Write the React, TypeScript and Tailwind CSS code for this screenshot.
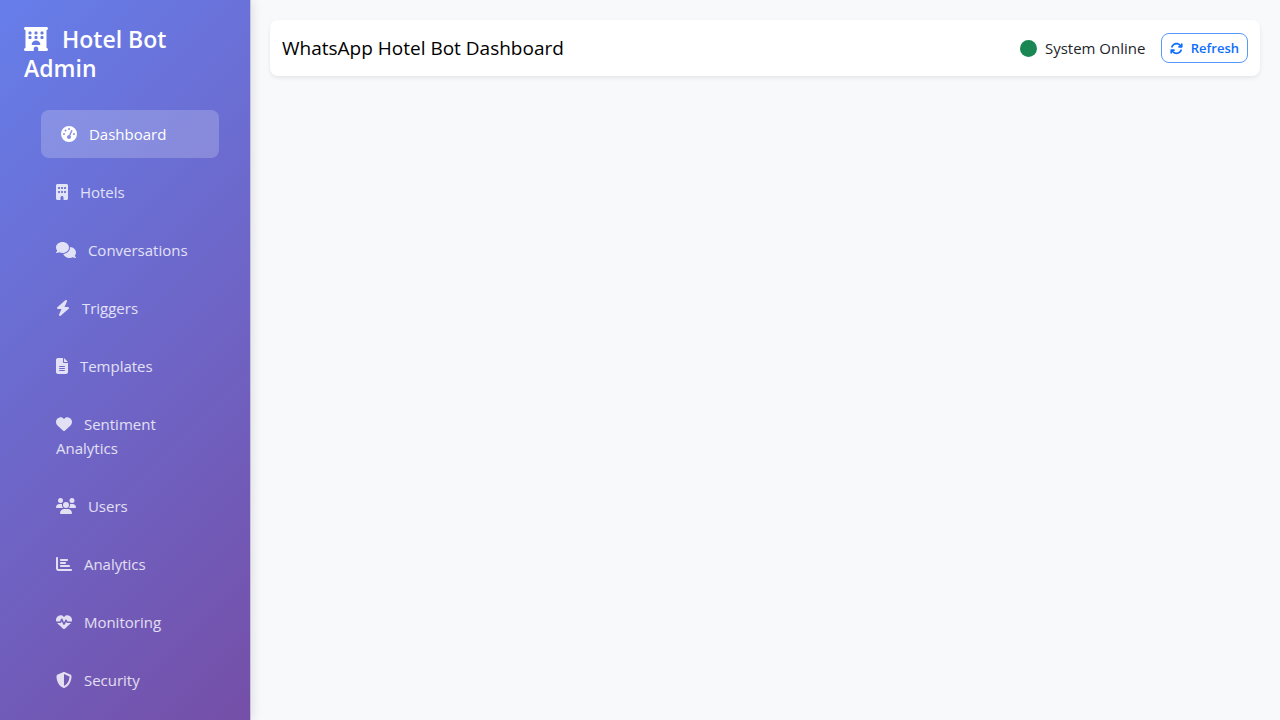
import type { IconType } from 'react-icons';
import {
  FaArrowsRotate,
  FaBolt,
  FaBuilding,
  FaChartBar,
  FaCircle,
  FaComments,
  FaFileLines,
  FaGaugeHigh,
  FaHeart,
  FaHeartPulse,
  FaHotel,
  FaShieldHalved,
  FaUsers,
} from 'react-icons/fa6';

type NavItem = { label: string; icon: IconType; width: string };

const navItems: NavItem[] = [
  { label: 'Dashboard', icon: FaGaugeHigh, width: 'w-4' },
  { label: 'Hotels', icon: FaBuilding, width: 'w-3' },
  { label: 'Conversations', icon: FaComments, width: 'w-5' },
  { label: 'Triggers', icon: FaBolt, width: 'w-3.5' },
  { label: 'Templates', icon: FaFileLines, width: 'w-3' },
  { label: 'Sentiment Analytics', icon: FaHeart, width: 'w-4' },
  { label: 'Users', icon: FaUsers, width: 'w-5' },
  { label: 'Analytics', icon: FaChartBar, width: 'w-4' },
  { label: 'Monitoring', icon: FaHeartPulse, width: 'w-4' },
  { label: 'Security', icon: FaShieldHalved, width: 'w-4' },
];

function Sidebar() {
  return (
    <aside className="w-[251px] shrink-0 overflow-hidden border-r border-[#c6c2e0] bg-[linear-gradient(135deg,#667eea_0%,#764ba2_108%)] shadow-[2px_0_10px_rgba(0,0,0,0.1)]">
      <h4 className="px-6 pt-[25px] text-[23px] leading-[29px] font-semibold text-white">
        <FaHotel className="mr-2 inline size-6 align-[-3px]" aria-hidden /> Hotel Bot Admin
      </h4>
      <nav className="mt-[27px] flex flex-col gap-2.5 px-9">
        {navItems.map(({ label, icon: Icon, width }, index) => (
          <a
            key={label}
            href="#"
            aria-current={index === 0 ? 'page' : undefined}
            className={
              index === 0
                ? 'block translate-x-[5px] rounded-lg bg-white/20 px-5 py-3 text-[15px] leading-6 font-medium text-white'
                : 'block rounded-lg px-5 py-3 text-[15px] leading-6 font-medium text-white/80'
            }
          >
            <Icon className={`mr-2 inline h-4 align-[-2px] ${width}`} aria-hidden /> {label}
          </a>
        ))}
      </nav>
    </aside>
  );
}

export default function App() {
  return (
    <div className="flex h-screen overflow-hidden bg-[#f8f9fa] font-['Open_Sans','Noto_Sans',sans-serif]">
      <Sidebar />
      <main className="min-w-0 flex-1 py-5 pr-5 pl-[19px]">
        <header className="flex h-14 items-center justify-between rounded-lg bg-white px-3 shadow-[0_2px_4px_rgba(0,0,0,0.08)]">
          <h1 className="text-[19px] leading-7 text-black">WhatsApp Hotel Bot Dashboard</h1>
          <div className="flex items-center gap-4">
            <span className="text-[15px] leading-6 text-[#212529]">
              <FaCircle className="mr-1 inline size-[17px] align-[-3px] text-[#198754]" aria-hidden /> System Online
            </span>
            <button
              type="button"
              className="rounded-lg border border-[#0d6efd]/70 px-2 py-1 text-[13px] leading-5 font-semibold text-[#0d6efd]"
            >
              <FaArrowsRotate className="mr-1 inline size-[13px] align-[-2px]" aria-hidden /> Refresh
            </button>
          </div>
        </header>
      </main>
    </div>
  );
}
